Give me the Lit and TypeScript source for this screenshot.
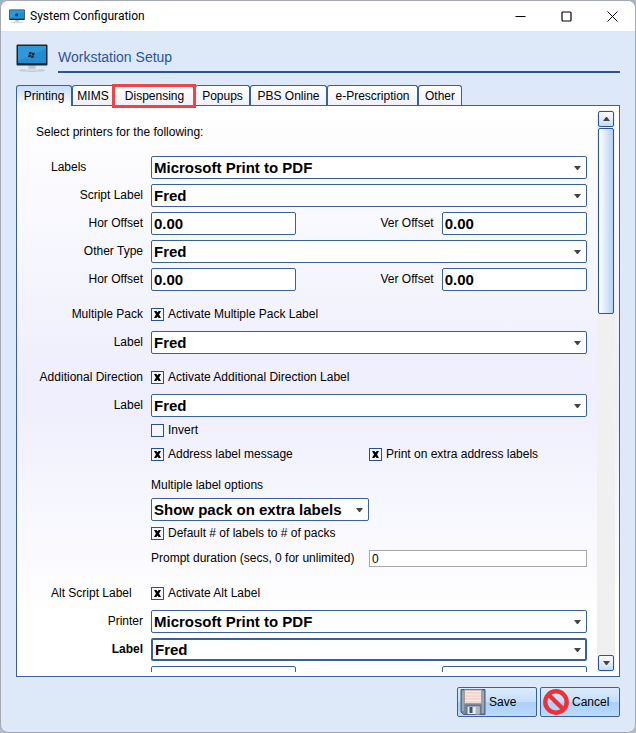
import { LitElement, html, css, svg } from "lit";
import { customElement, state, query } from "lit/decorators.js";
import { classMap } from "lit/directives/class-map.js";
import { styleMap } from "lit/directives/style-map.js";

const TABS = [
  { name: "Printing", width: 56 },
  { name: "MIMS", width: 42 },
  { name: "Dispensing", width: 81 },
  { name: "Popups", width: 55 },
  { name: "PBS Online", width: 77 },
  { name: "e-Prescription", width: 91 },
  { name: "Other", width: 44 },
];

const monitorIcon = (cls: string) => html`
  <svg class=${cls} viewBox="0 0 32 29" aria-hidden="true">
    <ellipse cx="16" cy="26.4" rx="13" ry="1.6" fill="#b9bdc4" opacity=".7"></ellipse>
    <path d="M12.500 21h7v4.500h-7z" fill="#c3c6ca"></path>
    <path d="M10 25h12l1.500 1.500h-15z" fill="#dfe1e3"></path>
    <rect x="0.500" y="0.500" width="31" height="21" rx="1" fill="#1c2730"></rect>
    <rect x="2" y="2" width="28" height="17" fill="#218dd0"></rect>
    <path d="M2 2h28v3L2 17z" fill="#3aa0dd" opacity=".6"></path>
    <path d="M13.300 8.300c1-.6 1.700-.5 2.500 0l-.6 2.300c-.8-.5-1.500-.5-2.500 0zM16.300 8.500c.9.500 1.700.5 2.700 0l-.7 2.300c-.9.500-1.700.5-2.600 0zM12.600 11.100c1-.5 1.700-.5 2.500 0l-.6 2.200c-.8-.5-1.500-.5-2.500 0zM15.600 11.300c.9.500 1.700.5 2.600 0l-.6 2.200c-.9.500-1.700.5-2.600 0z" fill="#0d2638"></path>
  </svg>`;

const floppyIcon = html`
  <svg class="btn-icon" viewBox="0 0 26 26" aria-hidden="true">
    <path d="M1 .5h24v25H3.500L1 23z" fill="#76899c" stroke="#4c5d70"></path>
    <path d="M2 2h2v20H2zM22 2h2v22h-2z" fill="#96a7b8"></path>
    <rect x="4.500" y="1" width="17" height="13.500" fill="#fbe9e4" stroke="#a79c9c"></rect>
    <path d="M5 4h16M5 7h16M5 10h16M5 13h16" stroke="#eec3b8"></path>
    <rect x="7" y="17" width="13" height="8.500" fill="#e8ecf0" stroke="#56677a"></rect>
    <rect x="9.500" y="18" width="3" height="6" fill="#41536a"></rect>
    <rect x="15.500" y="17.500" width="4" height="8" fill="#aeb8c2"></rect>
  </svg>`;

const cancelIcon = html`
  <svg class="btn-icon" viewBox="0 0 26 26" aria-hidden="true">
    <circle cx="13" cy="13" r="10.700" fill="none" stroke="#ee3137" stroke-width="4.400"></circle>
    <path d="M6 6l14 14" stroke="#ee3137" stroke-width="4.500"></path>
  </svg>`;

const caret = (up = false) => svg`
  <svg class="caret" viewBox="0 0 7 4" aria-hidden="true">
    <path d=${up ? "M0 4h7L4 0H3z" : "M0 0h7L4 4H3z"} fill="#444"></path>
  </svg>`;

@customElement("app-root")
export class AppRoot extends LitElement {
  @state() private tab = "Printing";
  @query(".form") private form!: HTMLElement;

  static styles = css`
    :host {
      display: block;
      height: 100vh;
      background: linear-gradient(#a9b2c2, #b9bcc6);
      color: #000;
      font: 12px/15px "Liberation Sans", Arial, sans-serif;
    }
    * { box-sizing: border-box; }
    button, input, select { font: inherit; color: inherit; margin: 0; }
    button { padding: 0; }
    .window {
      height: 100%;
      display: flex;
      flex-direction: column;
      border: 1px solid #a3a8b2;
      border-radius: 8px;
      background: #dde8f8;
      overflow: hidden;
    }
    .titlebar {
      flex: none;
      height: 30px;
      display: flex;
      align-items: center;
      padding-left: 8px;
      background: #fff;
    }
    .title {
      flex: 1;
      margin: 0 0 0 5px;
      font: 12px/16px Roboto, "Open Sans", sans-serif;
    }
    .small-monitor { width: 16px; height: 15px; }
    .big-monitor { width: 32px; height: 29px; }
    .winbtn {
      width: 46px;
      height: 30px;
      border: 0;
      background: none;
      display: grid;
      place-items: center;
    }
    .winbtn svg { width: 11px; height: 11px; }
    .body {
      flex: 1;
      min-height: 0;
      display: flex;
      flex-direction: column;
      padding: 13px 15px 15px;
    }
    .header { display: flex; gap: 10px; margin-bottom: 12px; }
    .heading {
      flex: 1;
      margin: 0;
      border-bottom: 2px solid #2a5699;
      color: #2a5699;
      font-size: 14px;
      font-weight: 400;
      line-height: 27px;
    }
    .tabs { display: flex; }
    .tab {
      position: relative;
      height: 20px;
      padding-top: 1px;
      border: 1px solid #3a6098;
      border-bottom: 0;
      border-radius: 3px 3px 0 0;
      background: linear-gradient(#fff, #f0f0fd);
      white-space: nowrap;
    }
    .tab.active {
      height: 21px;
      margin-bottom: -1px;
      z-index: 1;
      background: linear-gradient(#c4dcfa, #fff);
    }
    .tab.marked::after {
      content: "";
      position: absolute;
      inset: -2px -2px -3px -3px;
      border: 3px solid #f04444;
      z-index: 2;
    }
    .tab.marked { z-index: 2; }
    .panel {
      flex: 1;
      min-height: 0;
      display: flex;
      padding: 4px;
      border: 1px solid #3a6098;
      background: linear-gradient(#fff, #eeeefd 50%, #fff 90%);
    }
    .form {
      flex: 1;
      min-width: 0;
      overflow: hidden;
      padding: 15px 10px 0 15px;
    }
    .intro { margin: 0 0 16px; }
    .row {
      display: grid;
      grid-template-columns: 107px 1fr;
      column-gap: 8px;
      align-items: center;
      margin-top: 5px;
    }
    .row.under { margin-top: 6px; }
    .row.near { margin-top: 9px; }
    .row.loose { margin-top: 16px; }
    .row.section { margin-top: 19px; }
    .name { text-align: right; white-space: nowrap; }
    .name.outer { text-align: left; padding-left: 15px; }
    .name.strong { font-weight: 700; }
    .value { grid-column: 2; min-width: 0; }
    .halves { display: grid; grid-template-columns: 1fr 1fr; align-items: center; }
    .thirds { display: grid; grid-template-columns: 1fr 1fr 1fr; align-items: center; }
    .thirds .name { padding-right: 8px; }
    .thirds > :last-child { grid-column: 3; }
    .box, .combo select {
      width: 100%;
      height: 23px;
      border: 1px solid #3a6098;
      border-radius: 2px;
      background: #fff;
      padding: 0 2px;
      font-size: 15px;
      font-weight: 700;
      line-height: 21px;
      outline: 0;
    }
    .combo { display: grid; align-items: center; }
    .combo > * { grid-area: 1 / 1; }
    .combo select { appearance: none; padding-right: 16px; }
    .combo.focus select { border-width: 2px; line-height: 19px; }
    .caret { width: 7px; height: 4px; pointer-events: none; }
    .combo .caret { justify-self: end; margin-right: 6px; }
    .plain {
      width: 100%;
      height: 17px;
      border: 1px solid #a9a9a9;
      background: #fff;
      padding: 0 2px;
      outline: 0;
    }
    .check { display: flex; align-items: center; gap: 4px; white-space: nowrap; }
    .check input {
      appearance: none;
      width: 13px;
      height: 13px;
      display: grid;
      place-items: center;
      border: 1px solid #2a5090;
      background: #f6f6ff;
    }
    .check input:checked::after {
      content: "";
      width: 7px;
      height: 7px;
      background: #000;
      clip-path: polygon(0 0, 35% 0, 50% 20%, 65% 0, 100% 0, 72% 50%, 100% 100%, 65% 100%, 50% 80%, 35% 100%, 0 100%, 28% 50%);
    }
    .scrollbar {
      flex: none;
      width: 18px;
      display: flex;
      flex-direction: column;
      align-items: center;
      gap: 1px;
      padding: 1px;
      background: #f0f0f0;
    }
    .arrow, .thumb {
      width: 16px;
      border: 1px solid #2a5699;
      border-radius: 2px;
    }
    .arrow {
      height: 16px;
      display: grid;
      place-items: center;
      background: linear-gradient(#fff, #c2dcf8);
    }
    .thumb { height: 186px; background: linear-gradient(90deg, #fff, #b4d2f4); }
    .track { flex: 1; }
    .footer { display: flex; justify-content: flex-end; gap: 3px; margin-top: 10px; }
    .action {
      width: 80px;
      height: 30px;
      display: flex;
      align-items: center;
      gap: 3px;
      padding: 0 2px;
      border: 1px solid #3a6098;
      border-radius: 2px;
      background: linear-gradient(#dcebfd, #c6dffb 48%, #acd0f9 52%, #bbdafb);
    }
    .btn-icon { width: 26px; height: 26px; }
  `;

  private combo(id: string, value: string, focus = false) {
    return html`<div class=${classMap({ combo: true, focus })}>
      <select id=${id}><option>${value}</option></select>${caret()}
    </div>`;
  }

  private comboRow(id: string, name: string, value: string, extra = "", nameClass = "") {
    return html`<div class="row ${extra}">
      <label class="name ${nameClass}" for=${id}>${name}</label>
      ${this.combo(id, value, nameClass === "strong")}
    </div>`;
  }

  private offsetRow(id: string) {
    return html`<div class="row">
      <label class="name" for="${id}-hor">Hor Offset</label>
      <div class="thirds">
        <input class="box" id="${id}-hor" value="0.00" />
        <label class="name" for="${id}-ver">Ver Offset</label>
        <input class="box" id="${id}-ver" value="0.00" />
      </div>
    </div>`;
  }

  private check(text: string, checked = true) {
    return html`<label class="check"><input type="checkbox" .checked=${checked} />${text}</label>`;
  }

  private scroll(step: number) {
    this.form.scrollBy({ top: step });
  }

  render() {
    return html`
      <div class="window">
        <header class="titlebar">
          ${monitorIcon("small-monitor")}
          <p class="title">System Configuration</p>
          <button class="winbtn" aria-label="Minimize">
            <svg viewBox="0 0 11 11"><path d="M0.500 5.500h10" stroke="#000"></path></svg>
          </button>
          <button class="winbtn" aria-label="Maximize">
            <svg viewBox="0 0 11 11"><rect x="1" y="1" width="9" height="9" rx="1" fill="none" stroke="#000" stroke-width="1.200"></rect></svg>
          </button>
          <button class="winbtn" aria-label="Close">
            <svg viewBox="0 0 11 11"><path d="M.5.5l10 10M10.500.5l-10 10" stroke="#000"></path></svg>
          </button>
        </header>
        <main class="body">
          <div class="header">
            ${monitorIcon("big-monitor")}
            <h1 class="heading">Workstation Setup</h1>
          </div>
          <div class="tabs" role="tablist">
            ${TABS.map(
              ({ name, width }) => html`<button
                role="tab"
                aria-selected=${name === this.tab}
                class=${classMap({ tab: true, active: name === this.tab, marked: name === "Dispensing" })}
                style=${styleMap({ width: `${width}px` })}
                @click=${() => (this.tab = name)}
              >${name}</button>`
            )}
          </div>
          <div class="panel">
            <form class="form">
              <p class="intro">Select printers for the following:</p>
              ${this.comboRow("labels", "Labels", "Microsoft Print to PDF", "", "outer")}
              ${this.comboRow("script", "Script Label", "Fred")}
              ${this.offsetRow("script")}
              ${this.comboRow("other", "Other Type", "Fred")}
              ${this.offsetRow("other")}
              <div class="row loose">
                <span class="name">Multiple Pack</span>${this.check("Activate Multiple Pack Label")}
              </div>
              ${this.comboRow("pack", "Label", "Fred", "near")}
              <div class="row loose">
                <span class="name">Additional Direction</span>${this.check("Activate Additional Direction Label")}
              </div>
              ${this.comboRow("direction", "Label", "Fred", "near")}
              <div class="row under"><div class="value">${this.check("Invert", false)}</div></div>
              <div class="row near">
                <div class="value halves">
                  ${this.check("Address label message")}${this.check("Print on extra address labels")}
                </div>
              </div>
              <div class="row loose"><label class="value" for="multi">Multiple label options</label></div>
              <div class="row">
                <div class="value halves">${this.combo("multi", "Show pack on extra labels")}</div>
              </div>
              <div class="row"><div class="value">${this.check("Default # of labels to # of packs")}</div></div>
              <div class="row near">
                <div class="value halves">
                  <label for="prompt">Prompt duration (secs, 0 for unlimited)</label>
                  <input class="plain" id="prompt" value="0" />
                </div>
              </div>
              <div class="row section">
                <span class="name outer">Alt Script Label</span>${this.check("Activate Alt Label")}
              </div>
              ${this.comboRow("alt-printer", "Printer", "Microsoft Print to PDF", "near")}
              ${this.comboRow("alt-label", "Label", "Fred", "", "strong")}
              <div class="row">
                <div class="value thirds">
                  <input class="box" aria-label="Hor Offset" />
                  <input class="box" aria-label="Ver Offset" />
                </div>
              </div>
            </form>
            <div class="scrollbar">
              <button class="arrow" aria-label="Scroll up" @click=${() => this.scroll(-28)}>${caret(true)}</button>
              <div class="thumb"></div>
              <div class="track"></div>
              <button class="arrow" aria-label="Scroll down" @click=${() => this.scroll(28)}>${caret()}</button>
            </div>
          </div>
          <div class="footer">
            <button class="action">${floppyIcon}Save</button>
            <button class="action">${cancelIcon}Cancel</button>
          </div>
        </main>
      </div>
    `;
  }
}
